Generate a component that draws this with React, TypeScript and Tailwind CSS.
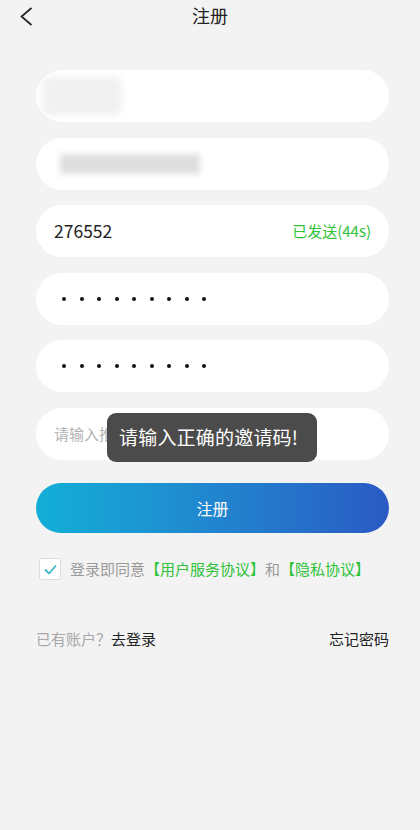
import React from 'react';

const font = { fontFamily: '"Noto Sans CJK SC", "Noto Sans", sans-serif' };

export default function App() {
  const dots = Array.from({ length: 9 });

  const PasswordDots = () => (
    <div className="flex items-center gap-[13.5px] pl-[26px]">
      {dots.map((_, i) => (
        <span key={i} className="block w-[4px] h-[4px] rounded-full bg-[#111]"></span>
      ))}
    </div>
  );

  return (
    <div className="w-[420px] h-[830px] bg-[#f3f3f3] text-[#333]" style={font}>
      {/* Header */}
      <div className="relative h-[30px] flex items-center justify-center">
        <svg className="absolute left-[18px] top-[6px]" width="16" height="21" viewBox="0 0 16 21">
          <polyline points="13.5,2 3.5,10.5 13.5,19" fill="none" stroke="#222" strokeWidth="1.7" />
        </svg>
        <span className="text-[18px] text-[#222]">注册</span>
      </div>

      <div className="px-[36px] pr-[31px] pt-[40px]">
        <div className="relative flex flex-col gap-[15.6px]">
          {/* Account (blurred) */}
          <div className="h-[52px] bg-white rounded-full flex items-center pl-[6px]">
            <div className="w-[80px] h-[38px] rounded-lg bg-[#f1f1f1] blur-[3px]"></div>
          </div>

          {/* Phone (blurred) */}
          <div className="h-[52px] bg-white rounded-full flex items-center pl-[24px]">
            <div className="w-[140px] h-[20px] bg-[#dedede] blur-[3px]"></div>
          </div>

          {/* SMS code */}
          <div className="h-[52px] bg-white rounded-full flex items-center justify-between pl-[18px] pr-[18px]">
            <span className="text-[17.5px] text-[#222]">276552</span>
            <span className="text-[15px] text-[#2fc23a]">已发送(44s)</span>
          </div>

          {/* Password */}
          <div className="h-[52px] bg-white rounded-full flex items-center">
            <PasswordDots />
          </div>

          {/* Confirm password */}
          <div className="h-[52px] bg-white rounded-full flex items-center">
            <PasswordDots />
          </div>

          {/* Referral code */}
          <div className="h-[52px] bg-white rounded-full flex items-center pl-[18px]">
            <span className="text-[15px] text-[#b3b3b3]">请输入推荐码</span>
          </div>

          {/* Toast */}
          <div className="absolute left-[71px] top-[343px] w-[210px] h-[49px] rounded-[9px] bg-[#4b4b4b] flex items-center pl-[12px]">
            <span className="text-[19px] text-white tracking-[0.2px]">请输入正确的邀请码!</span>
          </div>
        </div>

        {/* Submit */}
        <button className="mt-[23px] w-full h-[50px] rounded-full bg-gradient-to-r from-[#12afd7] to-[#2a5ac4] text-white text-[16px]">
          注册
        </button>

        {/* Agreement */}
        <div className="mt-[25px] flex items-center pl-[3px]">
          <div className="w-[22px] h-[22px] rounded-[3px] border border-[#dcdcdc] bg-white flex items-center justify-center">
            <svg width="15" height="13" viewBox="0 0 15 13">
              <polyline points="2,6.5 6,10.5 13,2.5" fill="none" stroke="#3bb8c8" strokeWidth="1.8" />
            </svg>
          </div>
          <span className="ml-[9px] text-[15px] text-[#9a9a9a]">
            登录即同意<span className="text-[#2fc23a]">【用户服务协议】</span>和<span className="text-[#2fc23a]">【隐私协议】</span>
          </span>
        </div>

        {/* Footer links */}
        <div className="mt-[48px] flex items-center justify-between">
          <div className="text-[15px]">
            <span className="text-[#a8a8a8]">已有账户？</span>
            <span className="text-[#222]">去登录</span>
          </div>
          <span className="text-[15px] text-[#222]">忘记密码</span>
        </div>
      </div>
    </div>
  );
}
